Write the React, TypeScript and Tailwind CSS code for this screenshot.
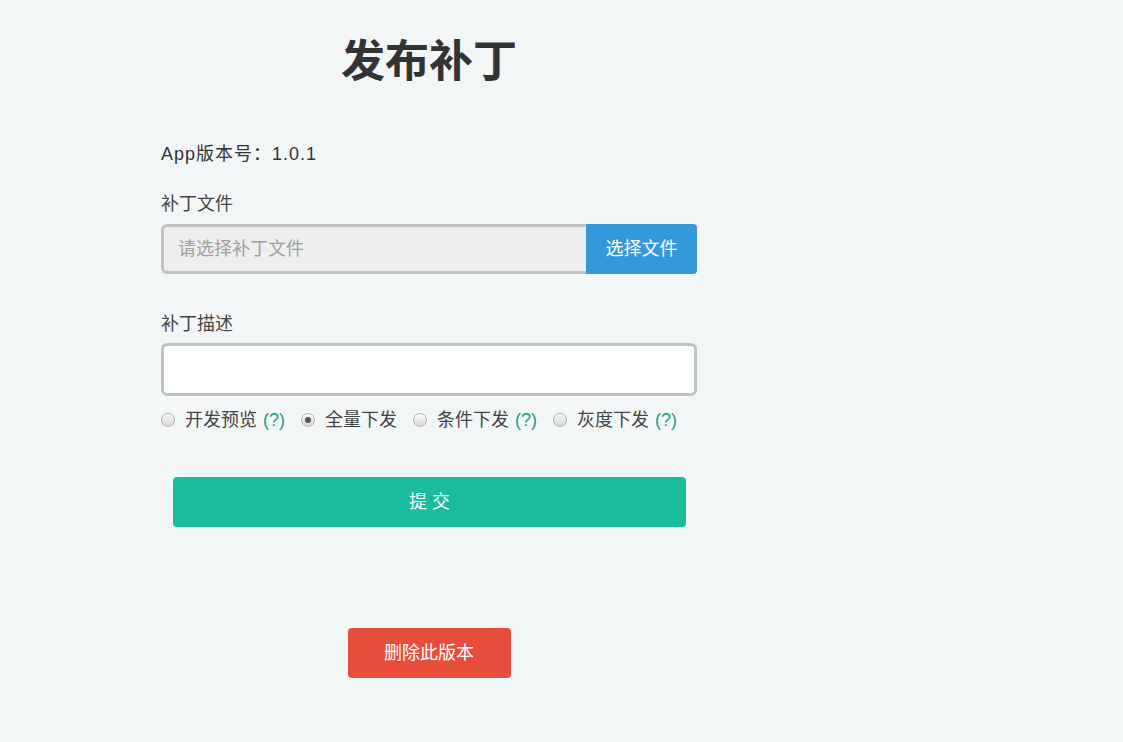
import React from "react";

function Radio({ checked }: { checked?: boolean }) {
  return (
    <span className="relative inline-flex h-[14px] w-[14px] shrink-0 items-center justify-center rounded-full border border-[#b3b3b3] bg-gradient-to-b from-[#fafafa] to-[#d6d6d6]">
      {checked && <span className="h-[6px] w-[6px] rounded-full bg-[#555]" />}
    </span>
  );
}

function Opt({ label, checked, help }: { label: string; checked?: boolean; help?: boolean }) {
  return (
    <label className="flex items-center gap-[10px]">
      <Radio checked={checked} />
      <span className="flex">
        <span>{label}</span>
        {help && <span className="ml-[6px] text-[#16a085]">(?)</span>}
      </span>
    </label>
  );
}

export default function App() {
  return (
    <div
      className="min-h-screen bg-[#f3f6f7] text-[#333]"
      style={{ fontFamily: '"Liberation Sans", "Noto Sans CJK SC", sans-serif' }}
    >
      <div className="ml-[161px] w-[536px]">
        <h1 className="pt-[35px] text-center text-[44px] font-bold leading-[54px] text-[#333]">发布补丁</h1>
        <p className="mt-[52px] text-[18px] leading-[26px] tracking-[1px]">App版本号：1.0.1</p>
        <p className="mt-[24px] text-[18px] leading-[26px] text-[#444]">补丁文件</p>
        <div className="mt-[7px] flex h-[50px]">
          <div className="flex flex-1 items-center rounded-l-[6px] border-[3px] border-r-0 border-[#bdc3c7] bg-[#eeeeee] pl-[14px] text-[18px] text-[#a0a0a0]">
            请选择补丁文件
          </div>
          <button className="w-[111px] rounded-r-[4px] bg-[#3498db] text-[18px] text-white">选择文件</button>
        </div>
        <p className="mt-[37px] text-[18px] leading-[26px] text-[#444]">补丁描述</p>
        <div className="mt-[6px] h-[53px] rounded-[6px] border-[3px] border-[#bdc3c7] bg-white" />
        <div className="mt-[11px] flex h-[26px] items-center gap-[16px] text-[18px] leading-[26px] text-[#444]">
          <Opt label="开发预览" help />
          <Opt label="全量下发" checked />
          <Opt label="条件下发" help />
          <Opt label="灰度下发" help />
        </div>
        <button className="ml-[12px] mt-[44px] flex h-[50px] w-[513px] items-center justify-center rounded-[4px] bg-[#1abc9c] text-[18px] text-white">
          提&nbsp;交
        </button>
        <div className="mt-[101px] flex justify-center">
          <button className="h-[50px] w-[163px] rounded-[4px] bg-[#e74c3c] text-[18px] text-white">删除此版本</button>
        </div>
      </div>
    </div>
  );
}
